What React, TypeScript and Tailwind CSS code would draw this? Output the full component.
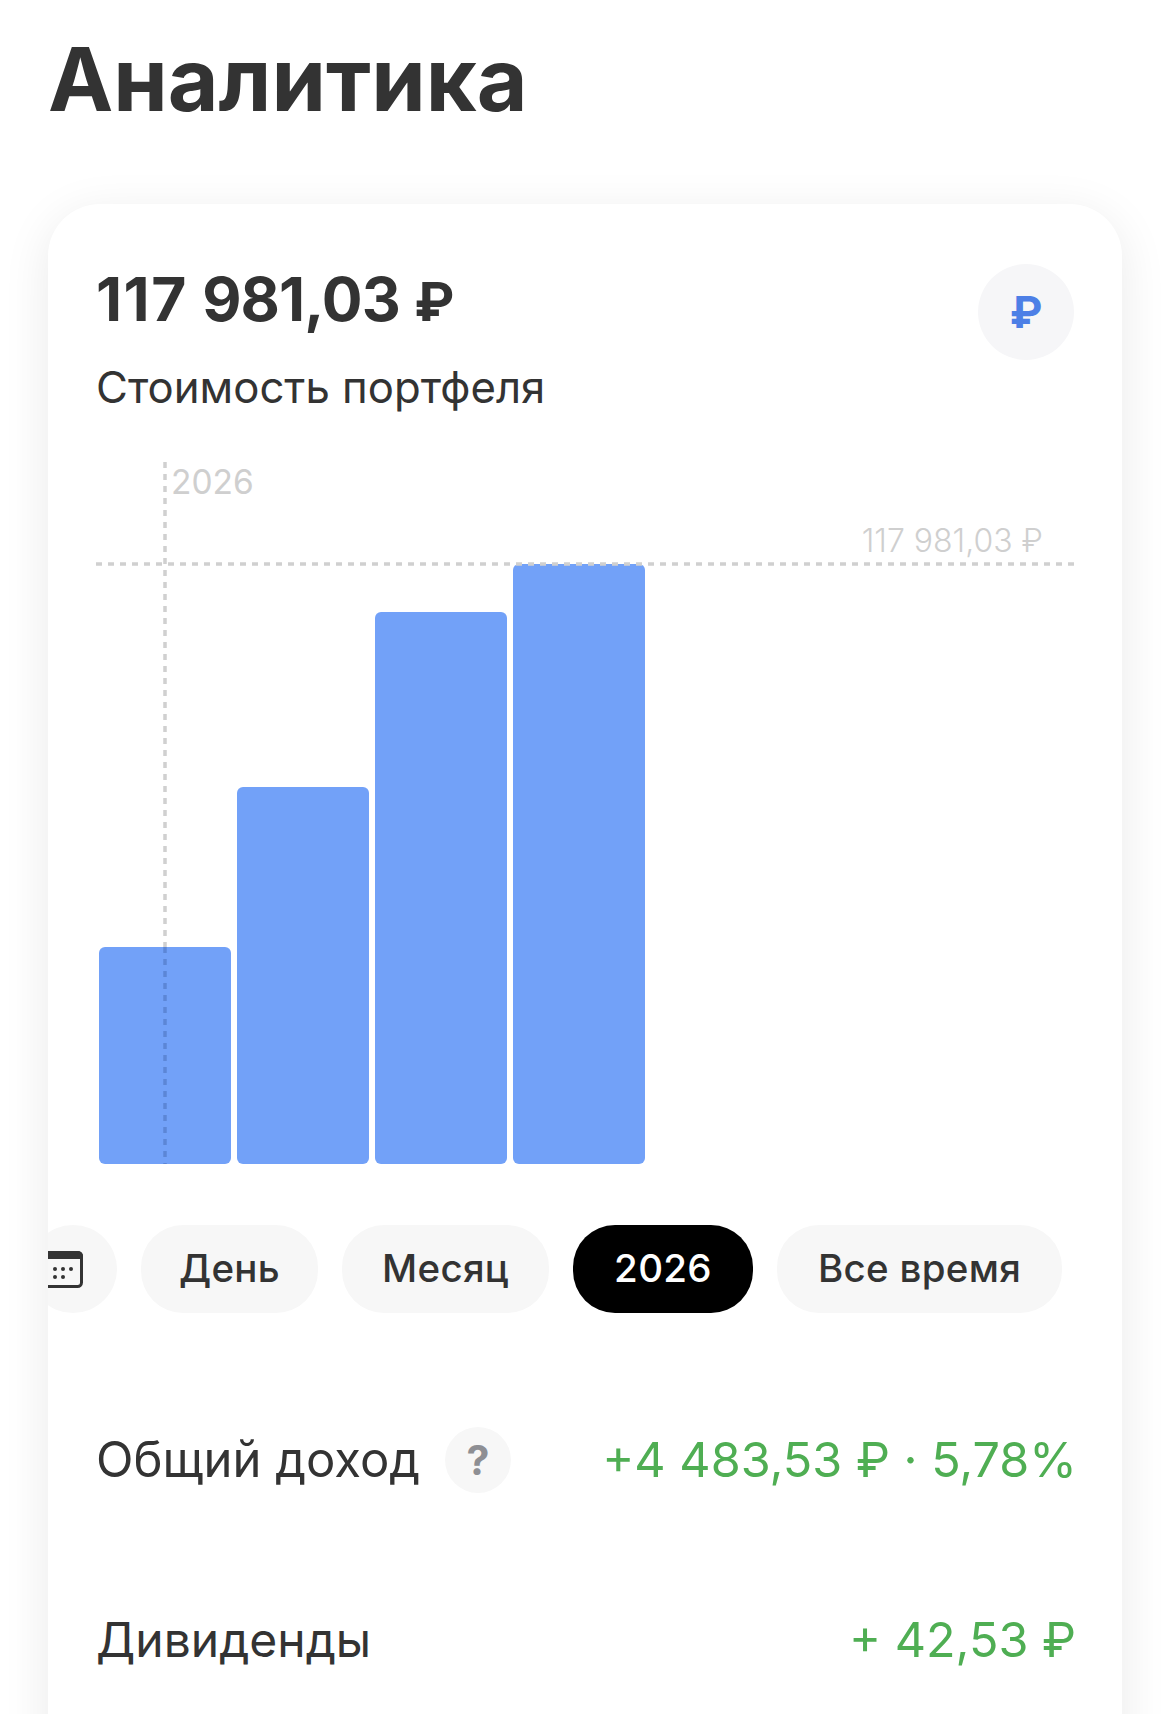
const font = "font-['Inter','Liberation_Sans',sans-serif]";

function Pill({ label, width, active }: { label: string; width: string; active?: boolean }) {
  return (
    <div
      className={
        "flex h-[88px] shrink-0 items-center justify-center rounded-[42px] text-[38.5px] font-medium tracking-[0.3px] " +
        width +
        " " +
        (active ? "bg-black text-white" : "bg-[#f7f7f7] text-[#333333]")
      }
    >
      {label}
    </div>
  );
}

function CalendarIcon() {
  return (
    <svg width="46" height="37" viewBox="0 0 46 37" fill="none" className="absolute left-[8px] top-[26px]">
      <rect x="1.5" y="1.5" width="43" height="34" rx="4" stroke="#333333" strokeWidth="3" />
      <path d="M5 0H41a5 5 0 0 1 5 5V8H0V5a5 5 0 0 1 5-5Z" fill="#333333" />
      <circle cx="18" cy="18" r="2" fill="#333333" />
      <circle cx="26" cy="18" r="2" fill="#333333" />
      <circle cx="34" cy="18" r="2" fill="#333333" />
      <circle cx="18" cy="26" r="2" fill="#333333" />
      <circle cx="26" cy="26" r="2" fill="#333333" />
    </svg>
  );
}

function Chart() {
  const bars = [
    { x: 3, y: 383, h: 217 },
    { x: 141, y: 223, h: 377 },
    { x: 279, y: 48, h: 552 },
    { x: 417, y: 0, h: 600 },
  ];
  return (
    <svg width="978" height="703" viewBox="0 -103 978 703" className="block">
      {bars.map((b) => (
        <rect key={b.x} x={b.x} y={b.y} width="132" height={b.h} rx="6" fill="#72a1f8" />
      ))}
      <line x1="69" y1="-102" x2="69" y2="383" stroke="#d0d0d0" strokeWidth="3.5" strokeDasharray="6 6" />
      <line x1="69" y1="383" x2="69" y2="600" stroke="#5c86d6" strokeWidth="3.5" strokeDasharray="6 6" />
      <line x1="0" y1="0" x2="978" y2="0" stroke="#d0d0d0" strokeWidth="3.5" strokeDasharray="6 6" />
      <text x="75" y="-70" fontFamily="Inter" fontSize="33.5" fill="#cfcfcf">2026</text>
      <text x="947" y="-12" textAnchor="end" fontFamily="Inter" fontSize="32" fontWeight="300" fill="#cfcfcf">117 981,03 ₽</text>
    </svg>
  );
}

export default function App() {
  return (
    <div className={"h-[1714px] w-[1170px] overflow-hidden bg-white px-12 " + font}>
      <h1 className="pt-[24px] text-[87.5px] font-bold leading-[110px] text-[#333333]">Аналитика</h1>
      <div className="mt-[70px] h-[1600px] overflow-hidden rounded-[52px] bg-white shadow-[0_10px_48px_rgba(0,0,0,0.085)]">
        <div className="flex justify-between px-12 pt-[59px]">
          <div>
            <div className="text-[60.5px] font-bold leading-[72px] text-[#333333]">
              <span className="tracking-[1.5px]">117</span> <span className="tracking-[-0.9px]">981,03</span>{" "}
              <span className="text-[54px]">₽</span>
            </div>
            <div className="mt-[22px] text-[43.7px] leading-[56px] text-[#333333]">Стоимость портфеля</div>
          </div>
          <div className="mt-[1px] flex h-24 w-24 items-center justify-center rounded-full bg-[#f6f6f8] text-[44px] font-bold text-[#4d7fe6]">
            ₽
          </div>
        </div>
        <div className="ml-12 mt-[45px]">
          <Chart />
        </div>
        <div className="ml-[-19px] mt-[61px] flex gap-6">
          <div className="relative h-[88px] w-[88px] shrink-0 rounded-full bg-[#f7f7f7]">
            <CalendarIcon />
          </div>
          <Pill label="День" width="w-[177px]" />
          <Pill label="Месяц" width="w-[207px]" />
          <Pill label="2026" width="w-[180px]" active />
          <Pill label="Все время" width="w-[285px]" />
        </div>
        <div className="mt-[114px] flex items-center justify-between pl-12 pr-[45px] leading-[66px]">
          <div className="flex items-center gap-[25px] text-[49px] text-[#333333]">
            Общий доход
            <span className="flex h-[66px] w-[66px] items-center justify-center rounded-full bg-[#f7f7f7] text-[41px] font-bold text-[#8e8f94]">?</span>
          </div>
          <div className="text-[48.5px] text-[#4fae53]">+4 483,53 ₽ · 5,78%</div>
        </div>
        <div className="mt-[114px] flex items-center justify-between pl-12 pr-[46px] leading-[66px]">
          <div className="text-[48px] text-[#333333]">Дивиденды</div>
          <div className="text-[48.5px] text-[#4fae53]">+ 42,53 ₽</div>
        </div>
      </div>
    </div>
  );
}
